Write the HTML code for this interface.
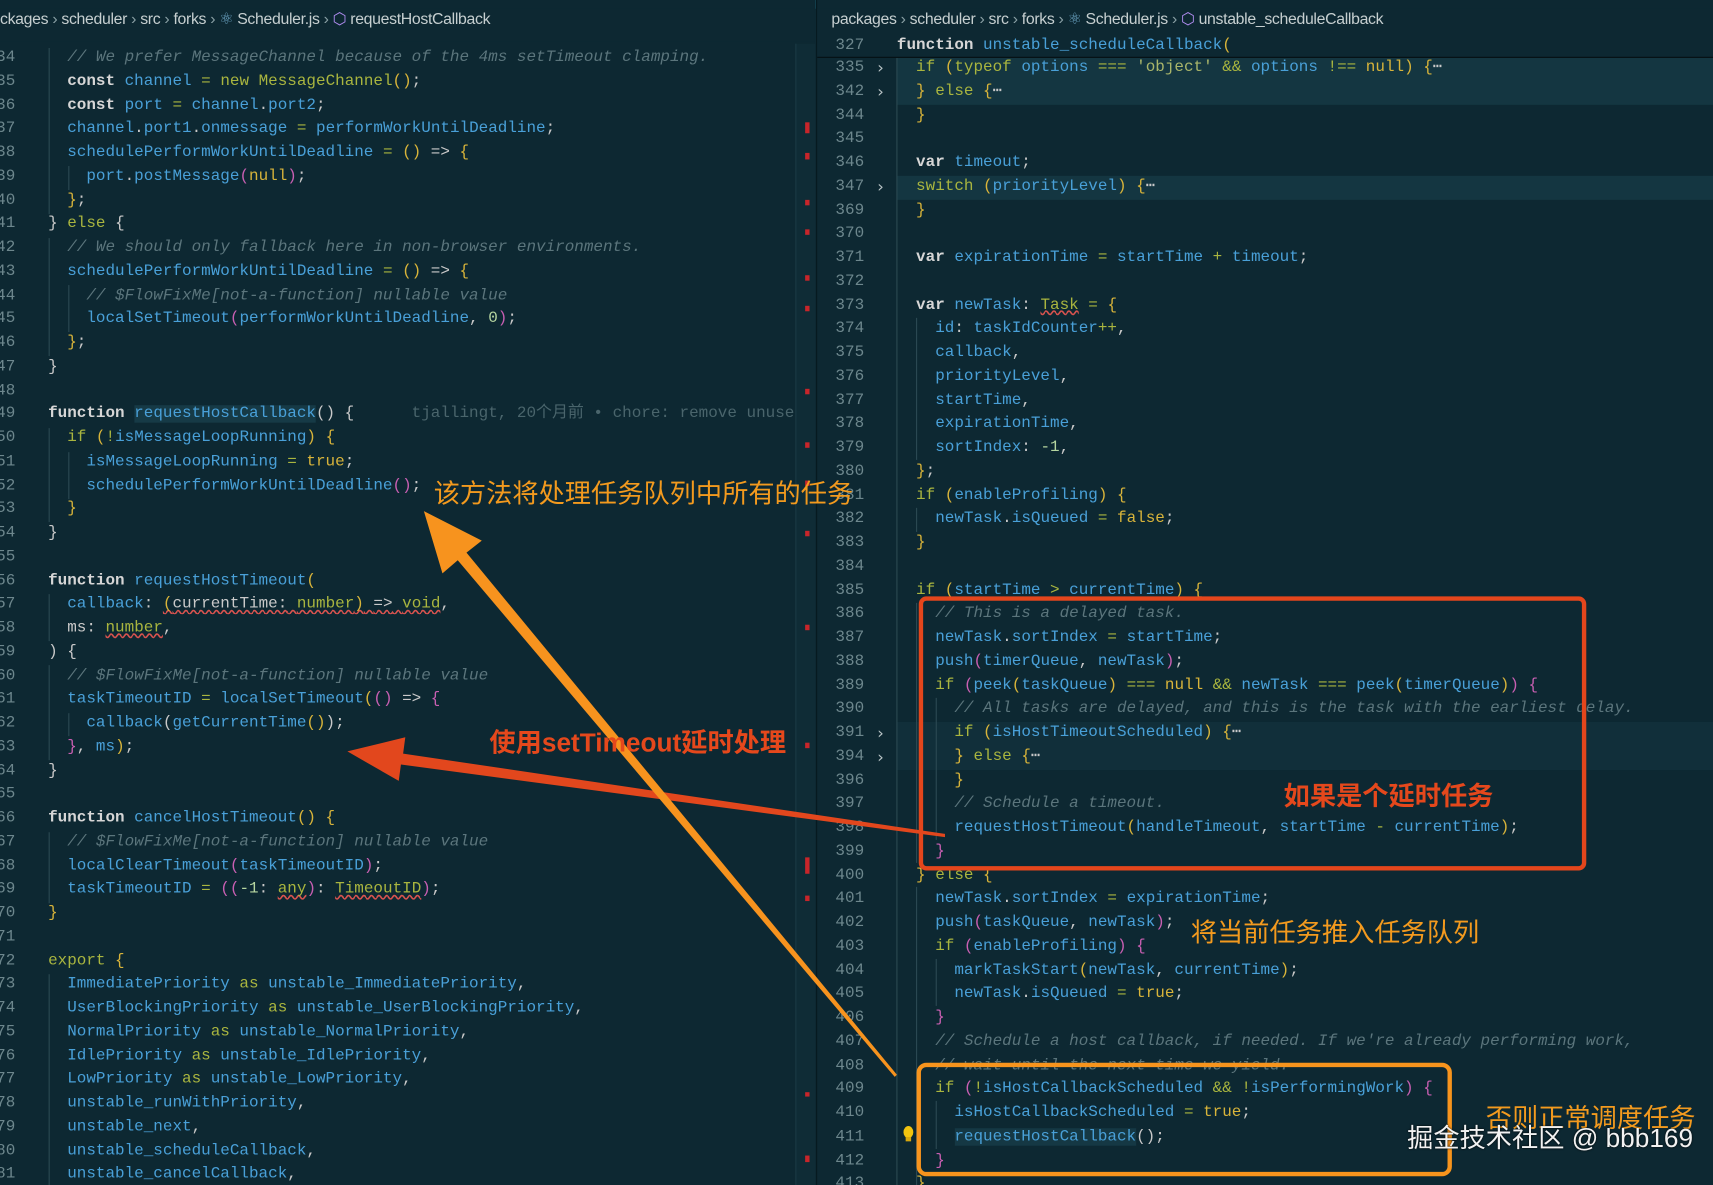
<!DOCTYPE html>
<html><head><meta charset="utf-8"><style>
html,body{margin:0;padding:0;background:#0e2a34;overflow:hidden;width:1713px;height:1185px}
#s{position:absolute;left:0;top:0;width:1568px;height:1085px;transform:scale(1.09247,1.0922);transform-origin:0 0;background:#0d2832;overflow:hidden;font-family:"Liberation Mono",monospace;font-size:14.6px}
.pane{position:absolute;top:0;height:1085px;overflow:hidden}
.code{position:absolute;white-space:normal;line-height:21.75px;color:#49a0d8}
.code div{height:21.75px;white-space:pre}
.ln{position:absolute;white-space:normal;line-height:21.75px;color:#6d878d;text-align:right}
.ln div{height:21.75px;white-space:pre}
.k{color:#d6d6d6;font-weight:bold}
.o{color:#a9b53f}
.y{color:#d8b43a}
.m{color:#c85fb2}
.c{color:#5b757c;font-style:italic}
.s{color:#a9b56a}
.n{color:#b6d6a0}
.w{color:#c9c9c9}
.q{text-decoration:underline wavy #d9534f;text-decoration-skip-ink:none}
.bc{position:absolute;top:10px;height:22px;font-family:"Liberation Sans",sans-serif;font-size:14.5px;color:#c6cfd0;white-space:pre;letter-spacing:-0.3px}
.bc .g{color:#8aa0a5}
.ann{position:absolute;font-family:"Liberation Sans","Noto Sans CJK SC",sans-serif;font-size:24px;white-space:nowrap;line-height:28px}
.hl{background:#143641}
.rm{position:absolute;width:4px;background:#c8252a}
</style></head><body><div id="s">
<div style="position:absolute;left:0;top:0;width:1568px;height:8px;background:#123d4b"></div>
<div style="position:absolute;left:80px;top:0;width:100px;height:8px;background:#1b4a59"></div>
<div style="position:absolute;left:1080px;top:0;width:320px;height:8px;background:#1b4a59"></div>

<div class="pane" style="left:0;width:746px;background:#0d2832">
<div class="ln" style="left:-14px;top:21.4px;width:28px">
<div>233</div><div>234</div><div>235</div><div>236</div><div>237</div><div>238</div><div>239</div><div>240</div><div>241</div><div>242</div><div>243</div><div>244</div><div>245</div><div>246</div><div>247</div><div>248</div><div>249</div><div>250</div><div>251</div><div>252</div><div>253</div><div>254</div><div>255</div><div>256</div><div>257</div><div>258</div><div>259</div><div>260</div><div>261</div><div>262</div><div>263</div><div>264</div><div>265</div><div>266</div><div>267</div><div>268</div><div>269</div><div>270</div><div>271</div><div>272</div><div>273</div><div>274</div><div>275</div><div>276</div><div>277</div><div>278</div><div>279</div><div>280</div><div>281</div>
</div>
<svg style="position:absolute;left:0;top:0" width="746" height="1085"><g stroke="#2c4a53" stroke-width="1">
<line x1="45" y1="44" x2="45" y2="196"/><line x1="63" y1="152" x2="63" y2="174"/>
<line x1="45" y1="218" x2="45" y2="326"/><line x1="63" y1="261" x2="63" y2="304"/>
<line x1="45" y1="392" x2="45" y2="478"/><line x1="63" y1="414" x2="63" y2="457"/>
<line x1="45" y1="544" x2="45" y2="587"/><line x1="45" y1="609" x2="45" y2="696"/><line x1="63" y1="653" x2="63" y2="674"/>
<line x1="45" y1="762" x2="45" y2="827"/><line x1="45" y1="892" x2="45" y2="1085"/></g></svg>
<div class="code" style="left:44px;top:21.4px">
<div><span class="c">  // DOM and worker environments.</span></div>
<div><span class="c">  // We prefer MessageChannel because of the 4ms setTimeout clamping.</span></div>
<div>  <span class="k">const</span> channel <span class="o">=</span> <span class="o">new MessageChannel</span><span class="y">()</span><span class="w">;</span></div>
<div>  <span class="k">const</span> port <span class="o">=</span> channel<span class="w">.</span>port2<span class="w">;</span></div>
<div>  channel<span class="w">.</span>port1<span class="w">.</span>onmessage <span class="o">=</span> performWorkUntilDeadline<span class="w">;</span></div>
<div>  schedulePerformWorkUntilDeadline <span class="o">=</span> <span class="y">()</span> <span class="w">=&gt;</span> <span class="y">{</span></div>
<div>    port<span class="w">.</span>postMessage<span class="m">(</span><span class="y">null</span><span class="m">)</span><span class="w">;</span></div>
<div>  <span class="y">}</span><span class="w">;</span></div>
<div><span class="w">}</span> <span class="o">else</span> <span class="w">{</span></div>
<div><span class="c">  // We should only fallback here in non-browser environments.</span></div>
<div>  schedulePerformWorkUntilDeadline <span class="o">=</span> <span class="y">()</span> <span class="w">=&gt;</span> <span class="y">{</span></div>
<div><span class="c">    // $FlowFixMe[not-a-function] nullable value</span></div>
<div>    localSetTimeout<span class="m">(</span>performWorkUntilDeadline<span class="w">,</span> <span class="n">0</span><span class="m">)</span><span class="w">;</span></div>
<div>  <span class="y">}</span><span class="w">;</span></div>
<div><span class="w">}</span></div>
<div> </div>
<div><span class="k">function</span> <span style="background:#163a46">requestHostCallback</span><span class="w">() {</span>      <span style="color:#4a656c;font-family:'Liberation Mono','Noto Sans CJK SC',monospace">tjallingt, 20个月前 • chore: remove unuse</span></div>
<div>  <span class="o">if</span> <span class="y">(</span><span class="o">!</span>isMessageLoopRunning<span class="y">)</span> <span class="y">{</span></div>
<div>    isMessageLoopRunning <span class="o">=</span> <span class="y">true</span><span class="w">;</span></div>
<div>    schedulePerformWorkUntilDeadline<span class="m">()</span><span class="w">;</span></div>
<div>  <span class="y">}</span></div>
<div><span class="w">}</span></div>
<div> </div>
<div><span class="k">function</span> requestHostTimeout<span class="y">(</span></div>
<div>  callback<span class="w">:</span> <span class="q"><span class="y">(</span><span class="w">currentTime:</span> <span class="o">number</span><span class="y">)</span> <span class="w">=&gt;</span> <span class="o">void</span></span><span class="w">,</span></div>
<div><span class="w">  ms:</span> <span class="o q">number</span><span class="w">,</span></div>
<div><span class="w">) {</span></div>
<div><span class="c">  // $FlowFixMe[not-a-function] nullable value</span></div>
<div>  taskTimeoutID <span class="o">=</span> localSetTimeout<span class="y">(</span><span class="m">()</span> <span class="w">=&gt;</span> <span class="m">{</span></div>
<div>    callback<span class="w">(</span>getCurrentTime<span class="y">()</span><span class="w">);</span></div>
<div>  <span class="m">}</span><span class="w">,</span> ms<span class="y">)</span><span class="w">;</span></div>
<div><span class="w">}</span></div>
<div> </div>
<div><span class="k">function</span> cancelHostTimeout<span class="y">()</span> <span class="y">{</span></div>
<div><span class="c">  // $FlowFixMe[not-a-function] nullable value</span></div>
<div>  localClearTimeout<span class="m">(</span>taskTimeoutID<span class="m">)</span><span class="w">;</span></div>
<div>  taskTimeoutID <span class="o">=</span> <span class="m">((</span><span class="n">-1</span><span class="w">:</span> <span class="o q">any</span><span class="m">)</span><span class="w">:</span> <span class="o q">TimeoutID</span><span class="m">)</span><span class="w">;</span></div>
<div><span class="y">}</span></div>
<div> </div>
<div><span class="o">export</span> <span class="y">{</span></div>
<div>  ImmediatePriority <span class="o">as</span> unstable_ImmediatePriority<span class="w">,</span></div>
<div>  UserBlockingPriority <span class="o">as</span> unstable_UserBlockingPriority<span class="w">,</span></div>
<div>  NormalPriority <span class="o">as</span> unstable_NormalPriority<span class="w">,</span></div>
<div>  IdlePriority <span class="o">as</span> unstable_IdlePriority<span class="w">,</span></div>
<div>  LowPriority <span class="o">as</span> unstable_LowPriority<span class="w">,</span></div>
<div>  unstable_runWithPriority<span class="w">,</span></div>
<div>  unstable_next<span class="w">,</span></div>
<div>  unstable_scheduleCallback<span class="w">,</span></div>
<div>  unstable_cancelCallback<span class="w">,</span></div>
</div>
<div style="position:absolute;left:728px;top:40px;width:18px;height:1045px;background:#0f2c36;border-left:1px solid #1a3a44"></div>
<div class="rm" style="left:737px;top:112px;height:10px"></div><div class="rm" style="left:737px;top:140px;height:6px"></div>
<div class="rm" style="left:737px;top:183px;height:5px"></div><div class="rm" style="left:737px;top:210px;height:5px"></div>
<div class="rm" style="left:737px;top:252px;height:5px"></div><div class="rm" style="left:737px;top:280px;height:5px"></div>
<div class="rm" style="left:737px;top:356px;height:5px"></div><div class="rm" style="left:737px;top:405px;height:5px"></div>
<div class="rm" style="left:737px;top:440px;height:5px"></div><div class="rm" style="left:737px;top:486px;height:5px"></div>
<div class="rm" style="left:737px;top:572px;height:5px"></div><div class="rm" style="left:737px;top:680px;height:5px"></div>
<div class="rm" style="left:737px;top:785px;height:15px"></div><div class="rm" style="left:737px;top:820px;height:5px"></div>
<div class="rm" style="left:737px;top:1000px;height:4px"></div><div class="rm" style="left:737px;top:1058px;height:6px"></div>
<div style="position:absolute;left:0;top:8px;width:746px;height:30px;background:#0d2832"></div>
<div class="bc" style="left:0"><span>ckages</span><span class="g"> › </span>scheduler<span class="g"> › </span>src<span class="g"> › </span>forks<span class="g"> › </span><span style="color:#6fa8c8">⚛</span> Scheduler.js<span class="g"> › </span><span style="color:#b08cf0">⬡</span> requestHostCallback</div>
</div>

<div class="pane" style="left:747px;width:821px;background:#0d2832;border-left:1px solid #07191f">
<div class="hl" style="position:absolute;left:73px;top:52px;width:760px;height:43.5px"></div>
<div class="hl" style="position:absolute;left:73px;top:160.8px;width:760px;height:21.75px"></div>
<div class="hl" style="position:absolute;left:73px;top:661px;width:760px;height:43.5px;background:#112f3a"></div>
<div class="ln" style="left:0;top:52.1px;width:43px">
<div>335</div><div>342</div><div>344</div><div>345</div><div>346</div><div>347</div><div>369</div><div>370</div><div>371</div><div>372</div><div>373</div><div>374</div><div>375</div><div>376</div><div>377</div><div>378</div><div>379</div><div>380</div><div>381</div><div>382</div><div>383</div><div>384</div><div>385</div><div>386</div><div>387</div><div>388</div><div>389</div><div>390</div><div>391</div><div>394</div><div>396</div><div>397</div><div>398</div><div>399</div><div>400</div><div>401</div><div>402</div><div>403</div><div>404</div><div>405</div><div>406</div><div>407</div><div>408</div><div>409</div><div>410</div><div>411</div><div>412</div><div>413</div>
</div>
<div class="ln" style="left:55px;top:52.1px;width:14px;color:#b9c4c6;text-align:left;font-family:'DejaVu Sans',sans-serif;font-size:15px">
<div>›</div><div>›</div><div></div><div></div><div></div><div>›</div><div></div><div></div><div></div><div></div><div></div><div></div><div></div><div></div><div></div><div></div><div></div><div></div><div></div><div></div><div></div><div></div><div></div><div></div><div></div><div></div><div></div><div></div><div>›</div><div>›</div>
</div>
<svg style="position:absolute;left:0;top:0" width="821" height="1085"><g stroke="#2c4a53" stroke-width="1">
<line x1="73" y1="52" x2="73" y2="1085"/><line x1="91" y1="291" x2="91" y2="421"/><line x1="91" y1="465" x2="91" y2="487"/>
<line x1="91" y1="552" x2="91" y2="790"/><line x1="109" y1="639" x2="109" y2="769"/>
<line x1="91" y1="812" x2="91" y2="1085"/><line x1="109" y1="878" x2="109" y2="921"/><line x1="109" y1="1008" x2="109" y2="1052"/></g></svg>
<div class="code" style="left:73px;top:52.1px">
<div>  <span class="o">if</span> <span class="y">(</span><span class="o">typeof</span> options <span class="o">===</span> <span class="s">'object'</span> <span class="o">&amp;&amp;</span> options <span class="o">!==</span> <span class="y">null)</span> <span class="y">{</span><span class="w">⋯</span></div>
<div>  <span class="y">}</span> <span class="o">else</span> <span class="y">{</span><span class="w">⋯</span></div>
<div>  <span class="y">}</span></div>
<div> </div>
<div>  <span class="k">var</span> timeout<span class="w">;</span></div>
<div>  <span class="o">switch</span> <span class="y">(</span>priorityLevel<span class="y">)</span> <span class="y">{</span><span class="w">⋯</span></div>
<div>  <span class="y">}</span></div>
<div> </div>
<div>  <span class="k">var</span> expirationTime <span class="o">=</span> startTime <span class="o">+</span> timeout<span class="w">;</span></div>
<div> </div>
<div>  <span class="k">var</span> newTask<span class="w">:</span> <span class="o q">Task</span> <span class="o">=</span> <span class="y">{</span></div>
<div>    id<span class="w">:</span> taskIdCounter<span class="o">++</span><span class="w">,</span></div>
<div>    callback<span class="w">,</span></div>
<div>    priorityLevel<span class="w">,</span></div>
<div>    startTime<span class="w">,</span></div>
<div>    expirationTime<span class="w">,</span></div>
<div>    sortIndex<span class="w">:</span> <span class="n">-1</span><span class="w">,</span></div>
<div>  <span class="y">}</span><span class="w">;</span></div>
<div>  <span class="o">if</span> <span class="y">(</span>enableProfiling<span class="y">)</span> <span class="y">{</span></div>
<div>    newTask<span class="w">.</span>isQueued <span class="o">=</span> <span class="y">false</span><span class="w">;</span></div>
<div>  <span class="y">}</span></div>
<div> </div>
<div>  <span class="o">if</span> <span class="y">(</span>startTime <span class="o">&gt;</span> currentTime<span class="y">)</span> <span class="y">{</span></div>
<div><span class="c">    // This is a delayed task.</span></div>
<div>    newTask<span class="w">.</span>sortIndex <span class="o">=</span> startTime<span class="w">;</span></div>
<div>    push<span class="m">(</span>timerQueue<span class="w">,</span> newTask<span class="m">)</span><span class="w">;</span></div>
<div>    <span class="o">if</span> <span class="m">(</span>peek<span class="y">(</span>taskQueue<span class="y">)</span> <span class="o">===</span> <span class="y">null</span> <span class="o">&amp;&amp;</span> newTask <span class="o">===</span> peek<span class="y">(</span>timerQueue<span class="y">)</span><span class="m">)</span> <span class="m">{</span></div>
<div><span class="c">      // All tasks are delayed, and this is the task with the earliest delay.</span></div>
<div>      <span class="o">if</span> <span class="y">(</span>isHostTimeoutScheduled<span class="y">)</span> <span class="y">{</span><span class="w">⋯</span></div>
<div>      <span class="y">}</span> <span class="o">else</span> <span class="y">{</span><span class="w">⋯</span></div>
<div>      <span class="y">}</span></div>
<div><span class="c">      // Schedule a timeout.</span></div>
<div>      requestHostTimeout<span class="y">(</span>handleTimeout<span class="w">,</span> startTime <span class="o">-</span> currentTime<span class="y">)</span><span class="w">;</span></div>
<div>    <span class="m">}</span></div>
<div>  <span class="y">}</span> <span class="o">else</span> <span class="y">{</span></div>
<div>    newTask<span class="w">.</span>sortIndex <span class="o">=</span> expirationTime<span class="w">;</span></div>
<div>    push<span class="m">(</span>taskQueue<span class="w">,</span> newTask<span class="m">)</span><span class="w">;</span></div>
<div>    <span class="o">if</span> <span class="m">(</span>enableProfiling<span class="m">)</span> <span class="m">{</span></div>
<div>      markTaskStart<span class="y">(</span>newTask<span class="w">,</span> currentTime<span class="y">)</span><span class="w">;</span></div>
<div>      newTask<span class="w">.</span>isQueued <span class="o">=</span> <span class="y">true</span><span class="w">;</span></div>
<div>    <span class="m">}</span></div>
<div><span class="c">    // Schedule a host callback, if needed. If we're already performing work,</span></div>
<div><span class="c">    // wait until the next time we yield.</span></div>
<div>    <span class="o">if</span> <span class="m">(</span><span class="o">!</span>isHostCallbackScheduled <span class="o">&amp;&amp;</span> <span class="o">!</span>isPerformingWork<span class="m">)</span> <span class="m">{</span></div>
<div>      isHostCallbackScheduled <span class="o">=</span> <span class="y">true</span><span class="w">;</span></div>
<div>      <span style="background:#153844">requestHostCallback</span><span class="w">();</span></div>
<div>    <span class="m">}</span></div>
<div>  <span class="y">}</span></div>
</div>
<div class="rm" style="left:-6px;top:97px;height:8px"></div><div class="rm" style="left:-6px;top:126px;height:10px"></div>
<div class="rm" style="left:-6px;top:160px;height:6px"></div><div class="rm" style="left:-6px;top:207px;height:6px"></div>
<div class="rm" style="left:-6px;top:240px;height:6px"></div><div class="rm" style="left:-6px;top:282px;height:6px"></div>
<div class="rm" style="left:-6px;top:922px;height:6px"></div><div class="rm" style="left:-6px;top:1000px;height:6px"></div>
<div class="rm" style="left:-6px;top:1020px;height:6px"></div><div class="rm" style="left:-6px;top:1058px;height:6px"></div>
<div style="position:absolute;left:0;top:8px;width:821px;height:44px;background:#0d2832;border-bottom:1px solid #050f13"></div>
<div class="bc" style="left:13px"><span>packages</span><span class="g"> › </span>scheduler<span class="g"> › </span>src<span class="g"> › </span>forks<span class="g"> › </span><span style="color:#6fa8c8">⚛</span> Scheduler.js<span class="g"> › </span><span style="color:#b08cf0">⬡</span> unstable_scheduleCallback</div>
<div class="ln" style="left:0;top:32px;width:43px"><div>327</div></div>
<div class="code" style="left:73px;top:32px"><div><span class="k">function</span> unstable_scheduleCallback<span class="y">(</span></div></div>
<div style="position:absolute;left:79px;top:1031px;width:9px;height:11px;border-radius:50%;background:#f2c40f"></div>
<div style="position:absolute;left:81px;top:1041px;width:5px;height:4px;background:#d8a80c"></div>
</div>

<svg style="position:absolute;left:0;top:0" width="1568" height="1085">
<rect x="843" y="548" width="607" height="247" rx="5" fill="none" stroke="#e4461c" stroke-width="4"/>
<rect x="841" y="975" width="486" height="100" rx="7" fill="none" stroke="#f7941d" stroke-width="4"/>
<polygon points="318,688 371,675 369,690 865,763.5 865,766.5 367,700 365,715" fill="#e2471d"/>
<polygon points="388,468 441,495 427,506 821,984 819,986 419,513 405,525" fill="#f7931e"/>
</svg>
<div class="ann" style="left:397px;top:439px;color:#f39a1e">该方法将处理任务队列中所有的任务</div>
<div class="ann" style="left:448px;top:667px;color:#e5481c;font-weight:bold">使用setTimeout延时处理</div>
<div class="ann" style="left:1175px;top:716px;color:#e5481c;font-weight:bold">如果是个延时任务</div>
<div class="ann" style="left:1090px;top:841px;color:#f39a1e">将当前任务推入任务队列</div>
<div class="ann" style="left:1360px;top:1011px;color:#f39a1e">否则正常调度任务</div>
<div class="ann" style="left:1288px;top:1029px;color:#f2f2f2;text-shadow:0 0 2px #000">掘金技术社区 @ bbb169</div>
</div></body></html>
